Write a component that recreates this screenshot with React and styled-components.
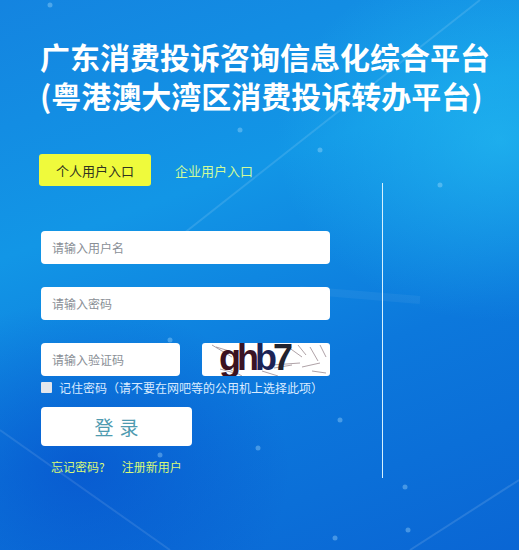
import React from 'react'
import styled, { createGlobalStyle } from 'styled-components'

const GlobalStyle = createGlobalStyle`
  html, body {
    margin: 0;
    padding: 0;
  }
  body {
    font-family: "Noto Sans CJK SC", "Microsoft YaHei", sans-serif;
  }
`

const Page = styled.div`
  position: relative;
  width: 519px;
  height: 550px;
  overflow: hidden;
  box-sizing: border-box;
  padding: 37px 0 0 40px;
  background:
    radial-gradient(ellipse 320px 260px at 500px 140px, rgba(40, 200, 245, 0.55), transparent 70%),
    radial-gradient(ellipse 300px 240px at 80px 470px, rgba(5, 70, 200, 0.55), transparent 70%),
    linear-gradient(160deg, #1484e0 0%, #1296e6 35%, #0c78dc 65%, #0a66d4 100%);
`

const Decor = styled.svg`
  position: absolute;
  inset: 0;
  pointer-events: none;
`

const Content = styled.div`
  position: relative;
`

const Title = styled.h1`
  margin: 0;
  font-size: 30px;
  font-weight: 700;
  color: #ffffff;
  white-space: nowrap;
`

const TitleLine = styled.div`
  height: 39px;
  line-height: 39px;
`

const Body = styled.div`
  display: flex;
  margin-top: 39px;
`

const FormColumn = styled.div`
  width: 290px;
  padding-left: 1px;
`

const Divider = styled.div`
  width: 1px;
  height: 295px;
  margin: 29px 0 0 51px;
  background: #d6f2ff;
`

const Tabs = styled.div`
  display: flex;
  align-items: center;
  height: 32px;
`

const Tab = styled.div`
  height: 32px;
  display: flex;
  align-items: center;
  justify-content: center;
  font-size: 13px;
  border-radius: 3px;
  ${({ $active }) =>
    $active
      ? `
    width: 112px;
    margin-left: -2px;
    background: #effa3c;
    color: #2f3320;
  `
      : `
    margin-left: 24px;
    color: #cffb9a;
  `}
`

const Fields = styled.div`
  display: flex;
  flex-direction: column;
  gap: 23px;
  margin-top: 45px;
`

const Input = styled.div`
  width: ${({ $w }) => $w || 289}px;
  height: 33px;
  box-sizing: border-box;
  padding-left: 11px;
  display: flex;
  align-items: center;
  background: #ffffff;
  border-radius: 4px;
  font-size: 12px;
  color: #8a8f96;
`

const CaptchaRow = styled.div`
  display: flex;
  justify-content: space-between;
  width: 289px;
`

const Captcha = styled.div`
  position: relative;
  width: 128px;
  height: 33px;
  background: #ffffff;
  border-radius: 3px;
  overflow: hidden;
  display: flex;
  align-items: flex-start;
  padding-left: 17px;
  box-sizing: border-box;
`

const CaptchaChar = styled.span`
  position: relative;
  font-family: "Liberation Sans", Arial, sans-serif;
  font-weight: 700;
  font-size: 36px;
  line-height: 36px;
  margin-top: -3px;
  letter-spacing: -4px;
  color: ${({ $c }) => $c};
`

const Noise = styled.svg`
  position: absolute;
  inset: 0;
`

const Remember = styled.label`
  display: flex;
  align-items: center;
  gap: 7px;
  height: 20px;
  margin-top: 1px;
  font-size: 12px;
  color: #d9ebff;
`

const Box = styled.span`
  width: 11px;
  height: 11px;
  background: #e2e6ec;
  border-radius: 1px;
`

const LoginButton = styled.div`
  width: 151px;
  height: 39px;
  margin-top: 10px;
  display: flex;
  align-items: center;
  justify-content: center;
  background: #ffffff;
  border-radius: 4px;
  font-size: 19px;
  letter-spacing: 6px;
  padding-left: 6px;
  box-sizing: border-box;
  color: #4f9bb0;
`

const Links = styled.div`
  display: flex;
  gap: 17px;
  margin: 12px 0 0 10px;
  font-size: 12px;
  color: #d9fa78;
`

const captcha = [
  { ch: 'g', c: '#3b1220' },
  { ch: 'h', c: '#3a1426' },
  { ch: 'b', c: '#1c2356' },
  { ch: '7', c: '#22222e' },
]

function App() {
  return (
    <>
      <GlobalStyle />
      <Page>
        <Decor width="519" height="550">
          <line x1="480" y1="0" x2="150" y2="260" stroke="rgba(255,255,255,0.12)" strokeWidth="2" />
          <line x1="0" y1="430" x2="170" y2="550" stroke="rgba(255,255,255,0.10)" strokeWidth="2" />
          <line x1="519" y1="480" x2="410" y2="550" stroke="rgba(255,255,255,0.12)" strokeWidth="2" />
          <line x1="300" y1="290" x2="420" y2="300" stroke="rgba(255,255,255,0.05)" strokeWidth="8" />
          {[[50, 5], [240, 130], [320, 150], [340, 420], [258, 448], [405, 487], [335, 538], [408, 530], [440, 185], [160, 455], [170, 340]].map(([x, y], i) => (
            <circle key={i} cx={x} cy={y} r="2.5" fill="rgba(180,230,255,0.35)" />
          ))}
        </Decor>
        <Content>
          <Title>
            <TitleLine>广东消费投诉咨询信息化综合平台</TitleLine>
            <TitleLine>(粤港澳大湾区消费投诉转办平台)</TitleLine>
          </Title>
          <Body>
            <FormColumn>
              <Tabs>
                <Tab $active>个人用户入口</Tab>
                <Tab>企业用户入口</Tab>
              </Tabs>
              <Fields>
                <Input>请输入用户名</Input>
                <Input>请输入密码</Input>
                <CaptchaRow>
                  <Input $w={139}>请输入验证码</Input>
                  <Captcha>
                    <Noise width="128" height="33">
                      <g stroke="#9a8a90" strokeWidth="0.8" fill="none">
                        <path d="M10 2 L30 14" />
                        <path d="M14 4 L34 10" />
                        <path d="M18 26 L36 31" />
                        <path d="M20 22 L40 33" />
                        <path d="M60 28 L76 33" />
                        <path d="M70 22 L98 20" />
                        <path d="M86 4 L100 14" />
                        <path d="M96 2 L104 12" />
                        <path d="M108 4 L116 18" />
                        <path d="M100 24 L118 20" />
                        <path d="M110 28 L124 30" />
                        <path d="M72 25 L90 22" />
                        <path d="M118 2 L124 14" />
                      </g>
                    </Noise>
                    {captcha.map(({ ch, c }) => (
                      <CaptchaChar key={ch} $c={c}>{ch}</CaptchaChar>
                    ))}
                  </Captcha>
                </CaptchaRow>
              </Fields>
              <Remember>
                <Box />
                记住密码（请不要在网吧等的公用机上选择此项）
              </Remember>
              <LoginButton>登录</LoginButton>
              <Links>
                <span>忘记密码?</span>
                <span>注册新用户</span>
              </Links>
            </FormColumn>
            <Divider />
          </Body>
        </Content>
      </Page>
    </>
  )
}

export default App
